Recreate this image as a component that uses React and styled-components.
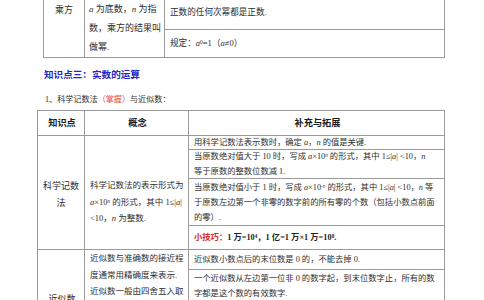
import React from 'react';
import styled, { createGlobalStyle } from 'styled-components';

const Global = createGlobalStyle`
  html, body {
    margin: 0;
    padding: 0;
    width: 484px;
    height: 300px;
    overflow: hidden;
    background: #fff;
  }
  body {
    font-family: "Liberation Serif", "Noto Sans CJK SC", serif;
    color: #2e2e2e;
  }
  sup {
    font-size: 62%;
    line-height: 0;
    vertical-align: 0.45em;
  }
`;

const Page = styled.div`
  display: flex;
  flex-direction: column;
`;

const TopTable = styled.div`
  margin-left: 43px;
  width: 402px;
  height: 58px;
  box-sizing: border-box;
  display: grid;
  grid-template-columns: 41px 80px 1fr;
  border: 1px solid #9a9a9a;
  border-top: none;
`;

const Cell = styled.div`
  box-sizing: border-box;
  border-right: ${p => (p.$last ? 'none' : '1px solid #9a9a9a')};
  font-size: ${p => p.$size || 8.5}px;
  line-height: ${p => p.$lh || 16.5}px;
  padding: ${p => p.$pad || '0 3px 0 5px'};
  display: flex;
  flex-direction: column;
  justify-content: ${p => p.$valign || 'center'};
  align-items: ${p => (p.$center ? 'center' : 'flex-start')};
  text-align: ${p => (p.$center ? 'center' : 'left')};
  white-space: nowrap;
  overflow: hidden;
`;

const Stack = styled.div`
  display: flex;
  flex-direction: column;
  min-width: 0;
`;

const SubRow = styled.div`
  box-sizing: border-box;
  height: ${p => p.$h}px;
  border-bottom: ${p => (p.$last ? 'none' : '1px solid #9a9a9a')};
  padding: ${p => p.$pad || '0 2px 0 5px'};
  font-size: ${p => p.$size || 8.3}px;
  line-height: 15px;
  display: flex;
  flex-direction: column;
  justify-content: ${p => p.$valign || 'center'};
  white-space: nowrap;
  overflow: hidden;
`;

const Heading = styled.h2`
  margin: 10px 0 0 44px;
  font-size: 9.6px;
  line-height: 14px;
  font-weight: 700;
  color: #2626c4;
`;

const Intro = styled.p`
  margin: 12px 0 0 45px;
  font-size: 8.1px;
  line-height: 12px;
  white-space: nowrap;
`;

const Red = styled.span`
  color: ${p => (p.$strong ? '#d8262b' : '#e24a4a')};
  font-weight: ${p => (p.$strong ? 700 : 400)};
`;

const Bold = styled.span`
  font-weight: 700;
  color: #222;
`;

const Table = styled.div`
  margin: 4px 0 0 37px;
  width: 408px;
  box-sizing: border-box;
  border: 1px solid #9a9a9a;
  border-bottom: none;
  display: flex;
  flex-direction: column;
`;

const Row = styled.div`
  display: grid;
  grid-template-columns: 47px 104px minmax(0, 1fr);
  border-bottom: 1px solid #9a9a9a;
  min-height: ${p => p.$min || 0}px;
`;

const Head = styled(Cell)`
  font-weight: 700;
  color: #1a1a1a;
  height: 24px;
`;

const V = styled.i`
  font-family: "Liberation Serif", serif;
`;

export default function App() {
  return (
    <Page>
      <Global />
      <TopTable>
        <Cell $center $valign="flex-start" $pad="2px 0 0 0" $lh={17} $size={9}>乘方</Cell>
        <Cell $valign="flex-start" $lh={19} $pad="0 1px 0 4px" $size={9}>
          <span><V>a</V> 为底数，<V>n</V> 为指</span>
          <span>数，乘方的结果叫</span>
          <span>做幂.</span>
        </Cell>
        <Stack>
          <SubRow $h={30} $pad="5px 4px 0 5px" $valign="flex-start" $size={8.6}>
            <span>正数的任何次幂都是正数.</span>
          </SubRow>
          <SubRow $h={27} $last $size={8.6}>
            <span>规定：<V>a</V><sup>0</sup>=1（<V>a</V>≠0）</span>
          </SubRow>
        </Stack>
      </TopTable>

      <Heading>知识点三：实数的运算</Heading>
      <Intro>1、科学记数法<Red>（掌握）</Red>与近似数：</Intro>

      <Table>
        <Row>
          <Head $center $size={9.2}>知识点</Head>
          <Head $center $size={9.2}>概念</Head>
          <Head $center $last $size={9.2}>补充与拓展</Head>
        </Row>

        <Row>
          <Cell $center $lh={17} $pad="4px 0 0 0" $size={9}>
            <span>科学记数</span>
            <span>法</span>
          </Cell>
          <Cell $pad="19px 2px 0 5px">
            <span>科学记数法的表示形式为</span>
            <span><V>a</V>×10<sup><V>n</V></sup> 的形式，其中 1≤|<V>a</V>|</span>
            <span>&lt;10，<V>n</V> 为整数.</span>
          </Cell>
          <Stack>
            <SubRow $h={14}>
              <span>用科学记数法表示数时，确定 <V>a</V>，<V>n</V> 的值是关键.</span>
            </SubRow>
            <SubRow $h={29}>
              <span>当原数绝对值大于 10 时，写成 <V>a</V>×10<sup><V>n</V></sup> 的形式，其中 1≤|<V>a</V>| &lt;10，<V>n</V></span>
              <span>等于原数的整数位数减 1.</span>
            </SubRow>
            <SubRow $h={47}>
              <span>当原数绝对值小于 1 时，写成 <V>a</V>×10<sup>-<V>n</V></sup> 的形式，其中 1≤|<V>a</V>| &lt;10，<V>n</V> 等</span>
              <span>于原数左边第一个非零的数字前的所有零的个数（包括小数点前面</span>
              <span>的零）.</span>
            </SubRow>
            <SubRow $h={23} $last>
              <span>
                <Red $strong>小技巧：</Red>
                <Bold>1 万=10<sup>4</sup>，1 亿=1 万×1 万=10<sup>8</sup>.</Bold>
              </span>
            </SubRow>
          </Stack>
        </Row>

        <Row $min={96}>
          <Cell $center $lh={17} $size={9}>近似数</Cell>
          <Cell $valign="flex-start" $pad="0 2px 0 5px">
            <span>近似数与准确数的接近程</span>
            <span>度通常用精确度来表示.</span>
            <span>近似数一般由四舍五入取</span>
            <span>得，四舍五入到哪一位，</span>
            <span>就说这个近似数精确到哪</span>
            <span>一位.</span>
          </Cell>
          <Stack>
            <SubRow $h={20}>
              <span>近似数小数点后的末位数是 0 的，不能去掉 0.</span>
            </SubRow>
            <SubRow $h={76} $last $valign="flex-start" $pad="1px 2px 0 5px">
              <span>一个近似数从左边第一位非 0 的数字起，到末位数字止，所有的数</span>
              <span>字都是这个数的有效数字.</span>
            </SubRow>
          </Stack>
        </Row>
      </Table>
    </Page>
  );
}
